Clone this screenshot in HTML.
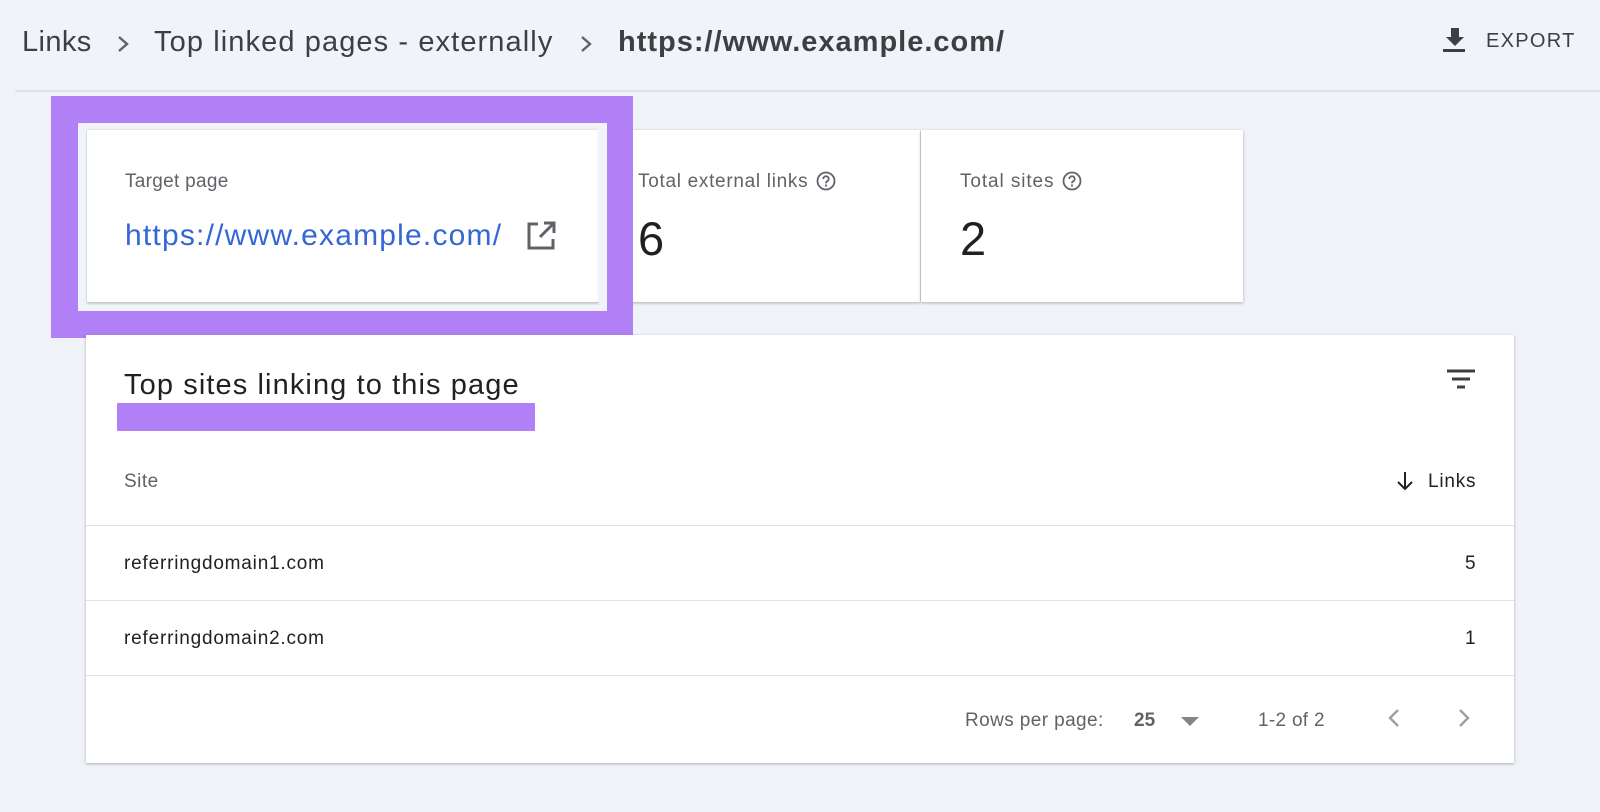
<!DOCTYPE html>
<html><head><style>
*{margin:0;padding:0;box-sizing:border-box}
body{width:1600px;height:812px;background:#f0f3f8;font-family:"Liberation Sans",Arial,sans-serif;position:relative;overflow:hidden;color:#202124}
.a{position:absolute;white-space:nowrap}
.card{position:absolute;background:#fff;box-shadow:0 1px 3px rgba(0,0,0,.3)}
</style></head><body>
<div class="a" style="left:22px;top:26px;font-size:29px;color:#3c4043;letter-spacing:0.4px">Links</div>
<svg class="a" style="left:114px;top:34px" width="18" height="20"><path d="M5 3l8 7-8 7" stroke="#5f6368" stroke-width="2.4" fill="none"/></svg>
<div class="a" style="left:154px;top:26px;font-size:29px;color:#3c4043;letter-spacing:1.1px">Top linked pages - externally</div>
<svg class="a" style="left:577px;top:34px" width="18" height="20"><path d="M5 3l8 7-8 7" stroke="#5f6368" stroke-width="2.4" fill="none"/></svg>
<div class="a" style="left:618px;top:26px;font-size:29px;color:#3c4043;font-weight:bold;letter-spacing:1px">https://www.example.com/</div>
<svg class="a" style="left:1442px;top:26px" width="26" height="28"><path d="M9 2h8v9h5l-9 9-9-9h5z" fill="#3c4043"/><rect x="1" y="23" width="22" height="3" fill="#3c4043"/></svg>
<div class="a" style="left:1486px;top:30px;font-size:20px;color:#3c4043;letter-spacing:1.3px">EXPORT</div>
<div class="a" style="left:15px;top:90px;width:1585px;height:2px;background:#dfe2e8"></div>

<div class="card" style="left:87px;top:130px;width:512px;height:172px"></div>
<div class="card" style="left:600px;top:130px;width:320px;height:172px"></div>
<div class="card" style="left:921px;top:130px;width:322px;height:172px"></div>
<div class="a" style="left:51px;top:96px;width:582px;height:242px;border:27px solid #b180f7;border-right-width:26px"></div>
<div class="a" style="left:78px;top:123px;width:529px;height:4px;background:#f0f3f8"></div>
<div class="a" style="left:599px;top:127px;width:8px;height:184px;background:#f0f3f8"></div>
<div class="a" style="left:78px;top:305px;width:529px;height:6px;background:#f0f3f8"></div>
<div class="a" style="left:78px;top:127px;width:8px;height:180px;background:#f0f3f8"></div>

<div class="a" style="left:125px;top:171px;font-size:19px;color:#5f6368;letter-spacing:0.3px">Target page</div>
<div class="a" style="left:125px;top:219px;font-size:30px;color:#3367d6;letter-spacing:1.2px">https://www.example.com/</div>
<svg class="a" style="left:525px;top:220px" width="32" height="32"><path d="M13 4H4v24h24v-9" stroke="#5f6368" stroke-width="3" fill="none"/><path d="M19 3h10v10M29 3L15 17" stroke="#5f6368" stroke-width="3" fill="none"/></svg>
<div class="a" style="left:638px;top:171px;font-size:19px;color:#5f6368;letter-spacing:0.7px">Total external links</div>
<svg class="a" style="left:815px;top:170px" width="22" height="22"><circle cx="11" cy="11" r="8.5" stroke="#5f6368" stroke-width="1.8" fill="none"/><path d="M8.3 9a2.7 2.7 0 1 1 3.6 2.5c-.7.3-.9.8-.9 1.7" stroke="#5f6368" stroke-width="1.8" fill="none"/><circle cx="11" cy="15.5" r="1.1" fill="#5f6368"/></svg>
<div class="a" style="left:638px;top:211px;font-size:47px;color:#202124">6</div>
<div class="a" style="left:960px;top:171px;font-size:19px;color:#5f6368;letter-spacing:0.9px">Total sites</div>
<svg class="a" style="left:1061px;top:170px" width="22" height="22"><circle cx="11" cy="11" r="8.5" stroke="#5f6368" stroke-width="1.8" fill="none"/><path d="M8.3 9a2.7 2.7 0 1 1 3.6 2.5c-.7.3-.9.8-.9 1.7" stroke="#5f6368" stroke-width="1.8" fill="none"/><circle cx="11" cy="15.5" r="1.1" fill="#5f6368"/></svg>
<div class="a" style="left:960px;top:211px;font-size:47px;color:#202124">2</div>

<div class="card" style="left:86px;top:335px;width:1428px;height:428px"></div>
<div class="a" style="left:117px;top:403px;width:418px;height:28px;background:#b180f7"></div>
<div class="a" style="left:124px;top:369px;font-size:29px;color:#202124;letter-spacing:1.1px">Top sites linking to this page</div>
<svg class="a" style="left:1445px;top:368px" width="32" height="24"><path d="M2 3h28M7 11h18M12 19h8" stroke="#3c4043" stroke-width="3"/></svg>
<div class="a" style="left:124px;top:471px;font-size:19px;color:#5f6368;letter-spacing:0.5px">Site</div>
<svg class="a" style="left:1395px;top:470px" width="20" height="22"><path d="M10 2v17M3 12l7 7 7-7" stroke="#202124" stroke-width="2" fill="none"/></svg>
<div class="a" style="left:1428px;top:471px;font-size:19px;color:#202124;letter-spacing:0.8px">Links</div>
<div class="a" style="left:86px;top:525px;width:1428px;height:1px;background:#e0e0e0"></div>
<div class="a" style="left:124px;top:553px;font-size:19px;letter-spacing:0.8px">referringdomain1.com</div>
<div class="a" style="left:1465px;top:553px;font-size:19px">5</div>
<div class="a" style="left:86px;top:600px;width:1428px;height:1px;background:#e0e0e0"></div>
<div class="a" style="left:124px;top:628px;font-size:19px;letter-spacing:0.8px">referringdomain2.com</div>
<div class="a" style="left:1465px;top:628px;font-size:19px">1</div>
<div class="a" style="left:86px;top:675px;width:1428px;height:1px;background:#e0e0e0"></div>
<div class="a" style="left:965px;top:710px;font-size:19px;color:#5f6368;letter-spacing:0.4px">Rows per page:</div>
<div class="a" style="left:1134px;top:710px;font-size:19px;color:#5f6368;font-weight:bold">25</div>
<svg class="a" style="left:1181px;top:716px" width="18" height="12"><path d="M0 1h18l-9 9z" fill="#80868b"/></svg>
<div class="a" style="left:1258px;top:710px;font-size:19px;color:#5f6368;letter-spacing:0.3px">1-2 of 2</div>
<svg class="a" style="left:1387px;top:707px" width="14" height="22"><path d="M11 3l-8 8 8 8" stroke="#9aa0a6" stroke-width="2.4" fill="none"/></svg>
<svg class="a" style="left:1457px;top:707px" width="14" height="22"><path d="M3 3l8 8-8 8" stroke="#9aa0a6" stroke-width="2.4" fill="none"/></svg>
</body></html>
